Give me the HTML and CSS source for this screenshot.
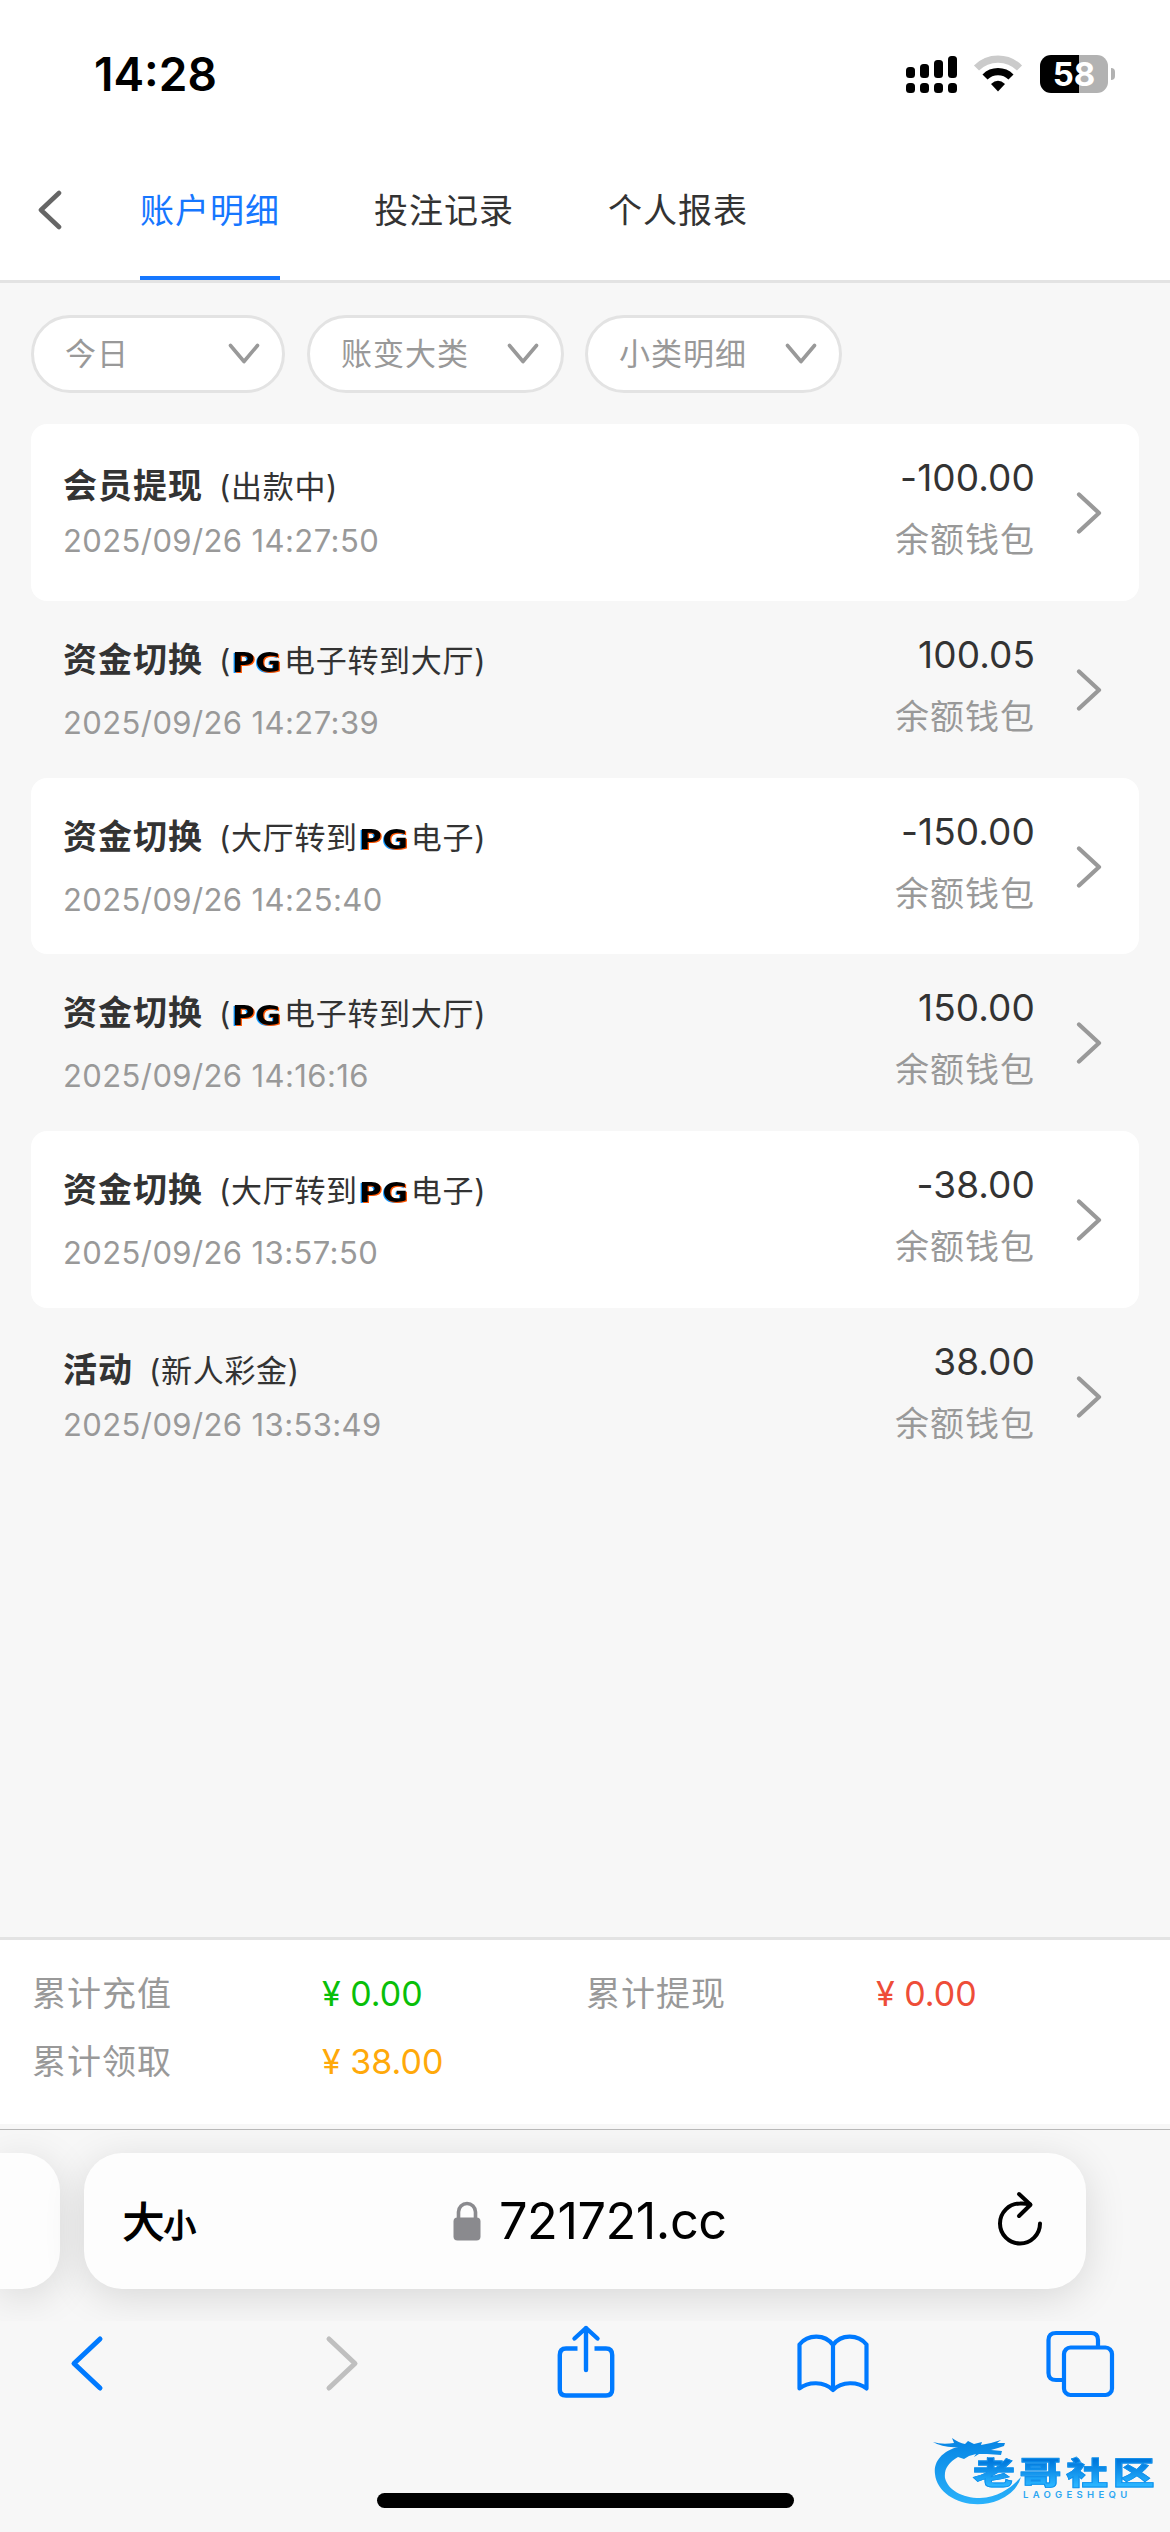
FILE: index.html
```html
<!DOCTYPE html>
<html lang="zh-CN">
<head>
<meta charset="utf-8">
<title>账户明细</title>
<link rel="stylesheet" href="styles.css">
</head>
<body>
<svg width="0" height="0" class="defs" aria-hidden="true">
  <symbol id="go" viewBox="0 0 26 42"><path d="M3 2.500 L23 21 L3 39.500" fill="none" stroke="#999" stroke-width="4.200" stroke-linecap="round" stroke-linejoin="round"/></symbol>
  <symbol id="down" viewBox="0 0 32 22"><path d="M2.500 2.500 L16 18.500 L29.500 2.500" fill="none" stroke="#999" stroke-width="3.600" stroke-linecap="round" stroke-linejoin="round"/></symbol>
</svg>
<div class="screen">
  <div class="status">
    <div class="clock">14:28</div>
    <div class="status-icons">
      <svg width="52" height="38" viewBox="0 0 52 38"><rect x="0" y="12" width="9" height="11" rx="3.500"/><rect x="14" y="9" width="9" height="14" rx="3.500"/><rect x="28" y="5" width="9" height="18" rx="3.500"/><rect x="42" y="1" width="9" height="22" rx="3.500"/><rect x="0" y="28" width="9" height="10" rx="3.500"/><rect x="14" y="28" width="9" height="10" rx="3.500"/><rect x="28" y="28" width="9" height="10" rx="3.500"/><rect x="42" y="28" width="9" height="10" rx="3.500"/></svg>
      <svg class="wifi" width="50" height="38" viewBox="0 0 50 38"><path d="M3.500 13 A30.500 30.500 0 0 1 46.500 13" fill="none" stroke="#cbcbcb" stroke-width="7.200"/><path d="M12 22 A18.500 18.500 0 0 1 38 22" fill="none" stroke="#000" stroke-width="7.200"/><path d="M25 36.500 L18 29 Q25 22.500 32 29 Z"/></svg>
      <div class="battery">58</div>
      <div class="nub"></div>
    </div>
  </div>

  <div class="tabs">
    <svg class="back" width="26" height="40" viewBox="0 0 26 40"><path d="M22 3 L4 20 L22 37" fill="none" stroke="#666" stroke-width="4.600" stroke-linecap="round" stroke-linejoin="round"/></svg>
    <div class="tab active">账户明细</div>
    <div class="tab">投注记录</div>
    <div class="tab">个人报表</div>
  </div>

  <div class="filters">
    <div class="pill first">今日<svg width="32" height="22"><use href="#down"/></svg></div>
    <div class="pill second">账变大类<svg width="32" height="22"><use href="#down"/></svg></div>
    <div class="pill">小类明细<svg width="32" height="22"><use href="#down"/></svg></div>
  </div>

  <div class="list">
    <div class="row card plain">
      <div class="info"><div class="title"><b>会员提现</b><span>(出款中)</span></div><div class="date">2025/09/26 14:27:50</div></div>
      <div class="sum"><div class="amount">-100.00</div><div class="wallet">余额钱包</div></div>
      <svg width="26" height="42"><use href="#go"/></svg>
    </div>
    <div class="row">
      <div class="info"><div class="title"><b>资金切换</b><span>(<i class="pg"><em>PG</em></i>电子转到大厅)</span></div><div class="date">2025/09/26 14:27:39</div></div>
      <div class="sum"><div class="amount">100.05</div><div class="wallet">余额钱包</div></div>
      <svg width="26" height="42"><use href="#go"/></svg>
    </div>
    <div class="row card">
      <div class="info"><div class="title"><b>资金切换</b><span>(大厅转到<i class="pg"><em>PG</em></i>电子)</span></div><div class="date">2025/09/26 14:25:40</div></div>
      <div class="sum"><div class="amount">-150.00</div><div class="wallet">余额钱包</div></div>
      <svg width="26" height="42"><use href="#go"/></svg>
    </div>
    <div class="row">
      <div class="info"><div class="title"><b>资金切换</b><span>(<i class="pg"><em>PG</em></i>电子转到大厅)</span></div><div class="date">2025/09/26 14:16:16</div></div>
      <div class="sum"><div class="amount">150.00</div><div class="wallet">余额钱包</div></div>
      <svg width="26" height="42"><use href="#go"/></svg>
    </div>
    <div class="row card">
      <div class="info"><div class="title"><b>资金切换</b><span>(大厅转到<i class="pg"><em>PG</em></i>电子)</span></div><div class="date">2025/09/26 13:57:50</div></div>
      <div class="sum"><div class="amount">-38.00</div><div class="wallet">余额钱包</div></div>
      <svg width="26" height="42"><use href="#go"/></svg>
    </div>
    <div class="row plain">
      <div class="info"><div class="title"><b>活动</b><span>(新人彩金)</span></div><div class="date">2025/09/26 13:53:49</div></div>
      <div class="sum"><div class="amount">38.00</div><div class="wallet">余额钱包</div></div>
      <svg width="26" height="42"><use href="#go"/></svg>
    </div>
  </div>

  <div class="totals">
    <div class="label">累计充值</div><div class="green">¥ 0.00</div><div class="label">累计提现</div><div class="red">¥ 0.00</div>
    <div class="label">累计领取</div><div class="orange">¥ 38.00</div>
  </div>

  <div class="browser">
    <div class="address-row">
      <div class="prev-page"></div>
      <div class="address">
        <div class="size"><span class="big">大</span><span class="small">小</span></div>
        <div class="site">
          <svg width="28" height="40" viewBox="0 0 28 40"><rect x="0.500" y="16.500" width="27" height="23" rx="4" fill="#8a8a8e"/><path d="M5.500 18 V11 A8.500 8.500 0 0 1 22.500 11 V18" fill="none" stroke="#8a8a8e" stroke-width="3.600"/></svg>
          <span>721721.cc</span>
        </div>
        <svg class="reload" width="48" height="58" viewBox="0 0 48 58" fill="none" stroke="#000" stroke-width="4" stroke-linecap="round" stroke-linejoin="round"><path d="M44 33.500 A20 20 0 1 1 24 13.500 Q29 13.200 34 14.500"/><path d="M23 4 L34.500 14.800 L23 26"/></svg>
      </div>
    </div>
    <div class="toolbar">
      <svg width="35" height="76" viewBox="0 0 35 76" fill="none" stroke="#007aff" stroke-width="5" stroke-linecap="round" stroke-linejoin="round"><path d="M31 15 L5 39.500 L31 64"/></svg>
      <svg width="35" height="76" viewBox="0 0 35 76" fill="none" stroke="#bfbfbf" stroke-width="5" stroke-linecap="round" stroke-linejoin="round"><path d="M4 15 L30 39.500 L4 64"/></svg>
      <svg width="60" height="76" viewBox="0 0 60 76" fill="none" stroke="#007aff" stroke-width="4.400" stroke-linejoin="round"><path d="M21.500 24.500 H10 Q3.800 24.500 3.800 31 V65.500 Q3.800 71.500 10 71.500 H50 Q56.200 71.500 56.200 65.500 V31 Q56.200 24.500 50 24.500 H38.500"/><path d="M30 46 V4 M18.500 14.500 L30 4 L41.500 14.500" stroke-linecap="round"/></svg>
      <svg width="74" height="76" viewBox="0 0 74 76" fill="none" stroke="#007aff" stroke-width="4.200" stroke-linejoin="round" stroke-linecap="round"><path d="M37 66 V21 C29 10 12 10 3.500 20.500 V64.500 C12 57.500 28 57 37 66 C46 57 62 57.500 70.500 64.500 V20.500 C62 10 45 10 37 21"/></svg>
      <svg width="70" height="76" viewBox="0 0 70 76" fill="none" stroke="#007aff" stroke-width="4.200"><path d="M17 56 H11 Q3.500 56 3.500 49 V16 Q3.500 9 11 9 H46 Q53 9 53 16 V23"/><rect x="19" y="23.500" width="48" height="47.500" rx="6.500"/></svg>
    </div>
    <div class="home"></div>
    <div class="brand">
      <svg width="94" height="78" viewBox="0 0 94 78"><defs><linearGradient id="sea" x1="0" y1="0" x2="0" y2="1"><stop offset="0" stop-color="#0583e3"/><stop offset="1" stop-color="#2ab2fb"/></linearGradient></defs><path fill="url(#sea)" d="M2 14 Q11 17 23 15 L21 10 Q28 15 34 16 L37 13 L43 16 L51 14 L50 17 L60 15 L70 12 L66 15 L74 15 L73 18 L67 20 L60 22 L71 23 L70 27 L56 26 L48 26 L43 29 L45 26 L38 28 L33 31 L27 29 C17 35 13 41 14 50 C17 62 31 70 49 70 C68 69 81 59 90 49 Q86 64 68 72 C39 84 6 69 4 46 C2 32 14 22 27 19 Q12 20 2 14Z"/></svg>
      <div class="brand-name">老哥社区</div>
      <div class="brand-latin">LAOGESHEQU</div>
    </div>
  </div>
</div>
</body>
</html>
```
FILE: styles.css
```css
* { box-sizing: border-box; }
body { margin: 0; background: #f7f7f7; font-family: Inter, "Noto Sans CJK SC", sans-serif; color: #333; }
svg { display: block; flex: none; }
.defs { position: absolute; }
.screen { width: 1170px; height: 2532px; display: flex; flex-direction: column; overflow: hidden; }

.status { height: 140px; flex: none; background: #fff; display: flex; justify-content: space-between; padding: 55px 55px 0 94px; }
.clock { font-size: 46px; font-weight: 600; line-height: 39px; color: #000; }
.status-icons { display: flex; height: 38px; align-items: center; }
.wifi { margin: 0 17px 0 15px; }
.battery { width: 68px; height: 38px; border-radius: 11px; background: linear-gradient(90deg, #000 39px, #b2b2b2 39px); color: #fff; font-size: 33px; font-weight: 700; line-height: 38px; text-align: center; }
.nub { width: 4px; height: 12px; margin-left: 3px; border-radius: 0 4px 4px 0; background: #b2b2b2; }

.tabs { height: 143px; flex: none; background: #fff; border-bottom: 3px solid #e3e3e3; display: flex; gap: 94px; padding-left: 37px; }
.back { margin: 50px -17px 0 0; }
.tab { width: 140px; height: 140px; line-height: 141px; font-size: 34px; letter-spacing: 1px; white-space: nowrap; }
.tab.active { color: #1677ff; border-bottom: 4px solid #1677ff; }

.filters { flex: none; display: flex; padding: 32px 31px 0; height: 141px; gap: 21px; }
.pill { width: 257px; height: 78px; border: 3px solid #e3e3e3; border-radius: 39px; background: #fff; display: flex; justify-content: space-between; align-items: center; padding: 0 22px 0 31px; color: #999; font-size: 31px; letter-spacing: 1px; line-height: 72px; }
.pill.first { width: 254px; }
.pill.second { margin-left: 1px; }

.list { flex: 1; padding: 0 31px; }
.row { height: 176.800px; padding: 0 37px 0 32px; display: flex; border-radius: 16px; }
.card { background: #fff; }
.info { flex: 1; padding-top: 39px; }
.title { height: 40px; line-height: 40px; display: flex; white-space: nowrap; }
.title b { font-size: 34px; font-weight: 700; letter-spacing: 1px; margin-right: 16px; }
.title span { font-size: 31px; letter-spacing: .7px; padding-top: 1px; }
.pg { display: inline-block; width: 53px; color: #000; }
.pg em { display: inline-block; font: 700 27px/30px "DejaVu Sans", sans-serif; transform: scaleX(1.150); transform-origin: left; text-shadow: 1px 1px 0 #f50, -1px 1px 0 #19f; margin-left: 1px; }
.date { margin-top: 27px; height: 32px; line-height: 32px; font-size: 31px; letter-spacing: .4px; color: #999; white-space: nowrap; }
.plain .info { padding-top: 42px; }
.plain .date { margin-top: 19px; }
.sum { text-align: right; padding-top: 34px; margin-right: 41px; }
.amount { font-size: 37px; letter-spacing: .1px; line-height: 40px; }
.wallet { margin-top: 22px; font-size: 34px; letter-spacing: 1px; line-height: 40px; color: #999; }
.row > svg { margin-top: 68px; }

.totals { height: 187px; flex: none; border-top: 3px solid #e3e3e3; background: #fff; display: grid; grid-template-columns: 290px 264px 290px 1fr; grid-auto-rows: 68px; align-content: start; padding: 20px 0 0 32px; line-height: 68px; font-size: 34px; color: #999; white-space: nowrap; }
.label { letter-spacing: 1px; }
.green { color: #09bf09; }
.red { color: #ee4d38; }
.orange { color: #ffa90a; }

.browser { height: 408px; flex: none; position: relative; background: #f7f7f7; display: flex; flex-direction: column; padding-top: 5px; }
.address-row { border-top: 1px solid #b8b8b8; padding-top: 23px; display: flex; gap: 24px; overflow: hidden; height: 192px; margin-bottom: -2px; }
.prev-page, .address { height: 136px; background: #fdfdfd; box-shadow: 0 8px 40px rgba(0,0,0,.13); }
.prev-page { width: 60px; border-radius: 0 38px 38px 0; }
.address { width: 1002px; border-radius: 38px; display: flex; align-items: center; padding: 0 42px 0 39px; color: #000; }
.size { width: 90px; display: flex; align-items: baseline; line-height: 60px; padding-top: 5px; }
.big { font-size: 41px; -webkit-text-stroke: 1.500px #000; }
.small { font-size: 32px; -webkit-text-stroke: 1.500px #000; }
.site { display: flex; align-items: center; gap: 18px; font-size: 50.500px; letter-spacing: -.5px; line-height: 60px; margin-left: 240px; }
.reload { margin: 0 0 4px auto; }
.toolbar { display: grid; grid-template-columns: 256px 231px 240px 249px 70px; padding-left: 69px; height: 76px; margin-top: 5px; }
.home { width: 417px; height: 15px; border-radius: 8px; background: #000; margin: 93px auto 0; }
.brand { position: absolute; left: 931px; top: 304px; width: 230px; height: 80px; }
.brand-name { position: absolute; left: 42px; top: 30px; font-size: 31px; line-height: 30px; font-weight: 900; letter-spacing: 3.500px; transform: scaleX(1.350); transform-origin: left; white-space: nowrap; background: linear-gradient(#0078dc 10%, #29b4ff 90%); -webkit-background-clip: text; background-clip: text; color: transparent; -webkit-text-stroke: .8px #1191ec; }
.brand-latin { position: absolute; left: 92px; top: 61px; font: 600 9.500px/11px Inter, sans-serif; letter-spacing: 4.300px; color: #2ba6f2; }
```
